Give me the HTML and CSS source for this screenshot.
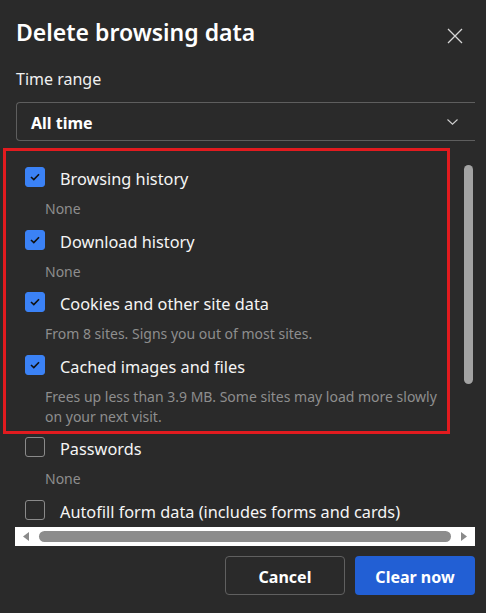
FILE: index.html
```html
<!DOCTYPE html>
<html lang="en">
<head>
<meta charset="utf-8">
<title>Delete browsing data</title>
<link rel="stylesheet" href="styles.css">
</head>
<body>
<div class="dialog">
  <header class="head">
    <h1 class="title">Delete browsing data</h1>
    <button class="close" aria-label="Close">
      <svg width="16" height="16" viewBox="0 0 16 16"><path d="M1 1 L15 15 M15 1 L1 15" stroke="#d6d6d6" stroke-width="1.3" fill="none"/></svg>
    </button>
  </header>
  <div class="field-label">Time range</div>
  <div class="select">
    <span class="select-value">All time</span>
    <svg class="chev" width="11" height="6" viewBox="0 0 11 6"><path d="M0.5 0.5 L5.5 5.2 L10.5 0.5" stroke="#cfcfcf" stroke-width="1.1" fill="none"/></svg>
  </div>
  <div class="scroller">
    <div class="list">
      <div class="item">
        <div class="row"><span class="cb on"><svg width="10" height="8" viewBox="0 0 10 8"><path d="M1 4 L3.8 6.6 L9 1.2" stroke="#111" stroke-width="1.6" fill="none"/></svg></span><span class="label">Browsing history</span></div>
        <div class="desc">None</div>
      </div>
      <div class="item">
        <div class="row"><span class="cb on"><svg width="10" height="8" viewBox="0 0 10 8"><path d="M1 4 L3.8 6.6 L9 1.2" stroke="#111" stroke-width="1.6" fill="none"/></svg></span><span class="label">Download history</span></div>
        <div class="desc">None</div>
      </div>
      <div class="item">
        <div class="row"><span class="cb on"><svg width="10" height="8" viewBox="0 0 10 8"><path d="M1 4 L3.8 6.6 L9 1.2" stroke="#111" stroke-width="1.6" fill="none"/></svg></span><span class="label">Cookies and other site data</span></div>
        <div class="desc">From 8 sites. Signs you out of most sites.</div>
      </div>
      <div class="item">
        <div class="row"><span class="cb on"><svg width="10" height="8" viewBox="0 0 10 8"><path d="M1 4 L3.8 6.6 L9 1.2" stroke="#111" stroke-width="1.6" fill="none"/></svg></span><span class="label">Cached images and files</span></div>
        <div class="desc">Frees up less than 3.9 MB. Some sites may load more slowly on your next visit.</div>
      </div>
      <div class="item">
        <div class="row"><span class="cb"></span><span class="label">Passwords</span></div>
        <div class="desc">None</div>
      </div>
      <div class="item">
        <div class="row"><span class="cb"></span><span class="label">Autofill form data (includes forms and cards)</span></div>
      </div>
    </div>
    <div class="vbar"><div class="vthumb"></div></div>
  </div>
  <div class="hbar">
    <svg class="arrow" width="7" height="9" viewBox="0 0 7 9"><path d="M6 0 L0 4.5 L6 9 Z" fill="#8a8a8a"/></svg>
    <div class="hthumb"></div>
    <svg class="arrow" width="7" height="9" viewBox="0 0 7 9"><path d="M1 0 L7 4.5 L1 9 Z" fill="#8a8a8a"/></svg>
  </div>
  <div class="actions">
    <button class="btn btn-secondary">Cancel</button>
    <button class="btn btn-primary">Clear now</button>
  </div>
  <div class="annotation"></div>
</div>
</body>
</html>
```
FILE: styles.css
```css
* { box-sizing: border-box; }
html, body { margin: 0; padding: 0; }
body {
  background: #2a2a2a;
  width: 486px;
  height: 613px;
  overflow: hidden;
  font-family: "Noto Sans", "Open Sans", sans-serif;
  color: #ffffff;
}
.dialog {
  position: relative;
  padding: 12px 11px 0 16px;
  height: 613px;
}
.head {
  display: flex;
  align-items: center;
  justify-content: space-between;
  height: 40px;
}
.title {
  margin: 0;
  font-size: 23px;
  font-weight: 600;
  line-height: 40px;
}
.close {
  background: none;
  border: 0;
  padding: 0;
  width: 16px;
  height: 16px;
  margin-right: 12px;
  margin-top: 8px;
  display: flex;
}
.field-label {
  margin-top: 15px;
  font-size: 16px;
  line-height: 24px;
  color: #f0f0f0;
}
.select {
  margin-top: 11px;
  height: 39px;
  border: 1px solid #5e5e5e;
  border-right: 0;
  border-radius: 4px 0 0 4px;
  display: flex;
  align-items: center;
  justify-content: space-between;
  padding: 2px 17px 0 14px;
}
.select-value {
  font-size: 16px;
  font-weight: 700;
}
.chev { margin-top: -2px; }
.scroller {
  margin-top: 8px;
  height: 378px;
  overflow: hidden;
  display: flex;
  margin-left: -1px;
}
.list {
  flex: 1;
  padding: 16px 0 0 10px;
}
.item {
  padding-bottom: 8.5px;
}
.row {
  display: flex;
  align-items: flex-start;
  height: 28px;
}
.cb {
  width: 20px;
  height: 20px;
  border: 1px solid #8a8a8a;
  border-radius: 3px;
  margin-top: 2px;
  margin-right: 15px;
  flex: none;
  display: flex;
  align-items: center;
  justify-content: center;
}
.cb.on {
  background: #3b82f6;
  border-color: #3b82f6;
}
.label {
  font-size: 16.3px;
  line-height: 28px;
  white-space: nowrap;
  color: #f5f5f5;
}
.desc {
  margin-top: 6px;
  padding-left: 20px;
  width: 420px;
  font-size: 14px;
  line-height: 20px;
  color: #8e8e8e;
}
.vbar {
  width: 10px;
  margin-right: 1px;
  padding-top: 16px;
  flex: none;
}
.vthumb {
  width: 9px;
  height: 219px;
  background: #a3a3a3;
  border-radius: 5px;
}
.hbar {
  height: 19px;
  background: #ffffff;
  display: flex;
  align-items: center;
  padding: 0 8px;
  margin-left: -1px;
  gap: 9px;
}
.hthumb {
  flex: 1;
  height: 11px;
  background: #8c8c8c;
  border-radius: 6px;
}
.actions {
  margin-top: 10px;
  display: flex;
  justify-content: flex-end;
  gap: 10px;
}
.btn {
  width: 120px;
  height: 39px;
  border-radius: 4px;
  padding: 3px 0 0;
  font-family: inherit;
  font-size: 16px;
  font-weight: 700;
  color: #ffffff;
}
.btn-secondary {
  background: transparent;
  border: 1px solid #606060;
}
.btn-primary {
  background: #225fd4;
  border: 0;
}
.annotation {
  position: absolute;
  left: 3px;
  top: 148px;
  width: 447px;
  height: 286px;
  border: 3px solid #e21b1f;
  pointer-events: none;
}
```
